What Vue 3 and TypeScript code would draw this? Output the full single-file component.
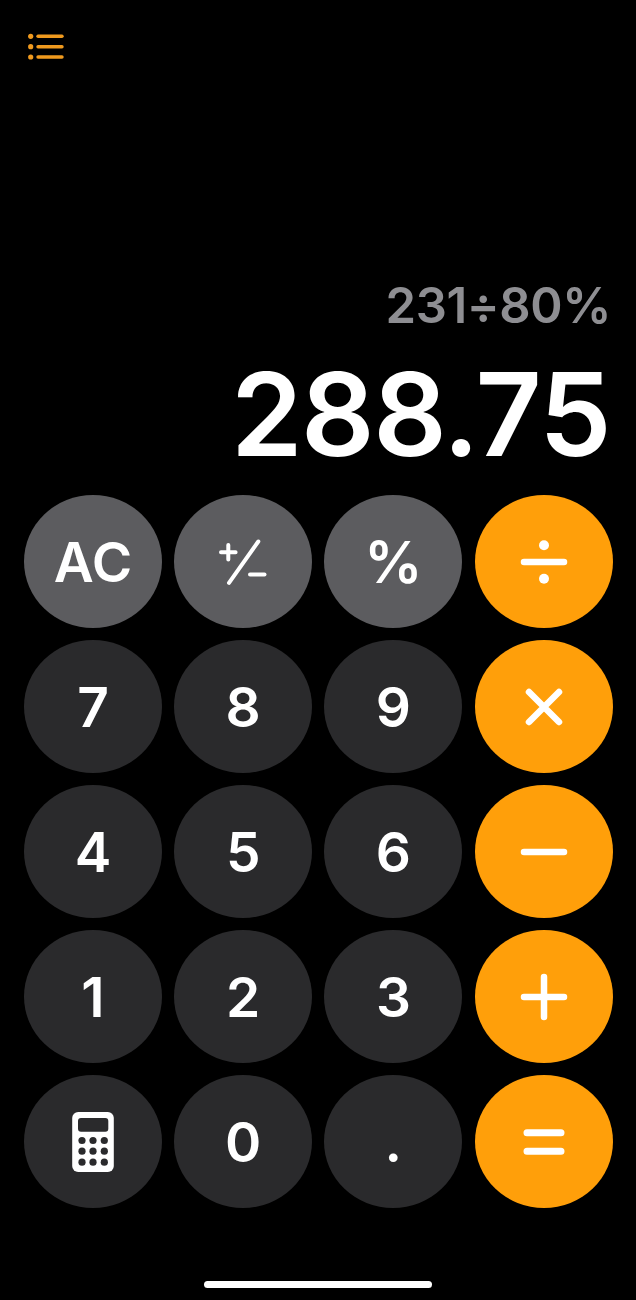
<script setup lang="ts">
interface Key {
  label: string
  kind: 'fn' | 'num' | 'op'
  icon?: string
}

const keys: Key[] = [
  { label: 'AC', kind: 'fn' },
  { label: '+/-', kind: 'fn', icon: 'sign' },
  { label: '%', kind: 'fn' },
  { label: 'divide', kind: 'op', icon: 'divide' },
  { label: '7', kind: 'num' },
  { label: '8', kind: 'num' },
  { label: '9', kind: 'num' },
  { label: 'multiply', kind: 'op', icon: 'times' },
  { label: '4', kind: 'num' },
  { label: '5', kind: 'num' },
  { label: '6', kind: 'num' },
  { label: 'minus', kind: 'op', icon: 'minus' },
  { label: '1', kind: 'num' },
  { label: '2', kind: 'num' },
  { label: '3', kind: 'num' },
  { label: 'plus', kind: 'op', icon: 'plus' },
  { label: 'calculator', kind: 'num', icon: 'calc' },
  { label: '0', kind: 'num' },
  { label: '.', kind: 'num' },
  { label: 'equals', kind: 'op', icon: 'equals' }
]

const calcDots: [number, number][] = []
for (const y of [-1.5, 9.2, 20.2]) {
  for (const x of [-11, 0, 11.3]) {
    calcDots.push([x, y])
  }
}
</script>

<template>
  <div class="screen">
    <header class="top">
      <svg class="list-icon" width="36" height="28" viewBox="0 0 36 28" fill="none" aria-label="history">
        <g fill="#f09a1e">
          <circle cx="2.7" cy="3.3" r="2.6" />
          <circle cx="2.7" cy="13.7" r="2.6" />
          <circle cx="2.7" cy="24" r="2.6" />
        </g>
        <g stroke="#f09a1e" stroke-width="3.4" stroke-linecap="round">
          <path d="M10 3.3H34" />
          <path d="M10 13.7H34" />
          <path d="M10 24H34" />
        </g>
      </svg>
    </header>

    <section class="display">
      <div class="expression">231÷80%</div>
      <div class="result">288.75</div>
    </section>

    <section class="keypad">
      <button v-for="key in keys" :key="key.label" class="key" :class="[key.kind, { percent: key.label === '%' }]" type="button" :aria-label="key.label">
        <template v-if="!key.icon">{{ key.label }}</template>
        <svg v-else width="80" height="80" viewBox="-40 -40 80 80" fill="none" stroke="#fff" stroke-linecap="round">
          <g v-if="key.icon === 'sign'" stroke-width="4">
            <path d="M-22 -9.8H-7.4M-14.7 -17V-2.6" />
            <path d="M-14 20.8L15.3 -20.5" />
            <path d="M7 12.5H21.5" />
          </g>
          <g v-else-if="key.icon === 'divide'">
            <path d="M-20 0H20" stroke-width="6.5" />
            <circle cx="0" cy="-16.7" r="5" fill="#fff" stroke="none" />
            <circle cx="0" cy="16.7" r="5" fill="#fff" stroke="none" />
          </g>
          <path v-else-if="key.icon === 'times'" d="M-15 -15L15 15M15 -15L-15 15" stroke-width="6.5" />
          <path v-else-if="key.icon === 'minus'" d="M-20 0H20" stroke-width="6.5" />
          <path v-else-if="key.icon === 'plus'" d="M-20 0H20M0 -20V20" stroke-width="6.5" />
          <path v-else-if="key.icon === 'equals'" d="M-17 -9.3H17M-17 9.3H17" stroke-width="7" />
          <g v-else-if="key.icon === 'calc'" stroke="none">
            <rect x="-20.8" y="-30" width="41.6" height="60" rx="6" fill="#fff" />
            <rect x="-15" y="-24" width="30.3" height="13.8" rx="3" fill="#2a2a2c" />
            <circle v-for="(d, i) in calcDots" :key="i" :cx="d[0]" :cy="d[1]" r="3.6" fill="#2a2a2c" />
          </g>
        </svg>
      </button>
    </section>

    <div class="home-bar"></div>
  </div>
</template>

<style>
html,
body {
  margin: 0;
  background: #000;
}
</style>

<style scoped>
.screen {
  display: flex;
  flex-direction: column;
  width: 636px;
  height: 1300px;
  background: #000;
  font-family: Inter, "Liberation Sans", sans-serif;
  overflow: hidden;
}

.top {
  height: 60px;
  padding: 33px 0 0 28px;
  flex: none;
}

.list-icon {
  display: block;
}

.display {
  flex: none;
  height: 402px;
  display: flex;
  flex-direction: column;
  justify-content: flex-end;
  align-items: flex-end;
  padding: 0 26px 11px 0;
  box-sizing: border-box;
}

.expression {
  margin-bottom: 10px;
  margin-right: -1px;
  font-size: 49px;
  font-weight: 600;
  letter-spacing: -0.4px;
  line-height: 60px;
  color: #8e8e92;
}

.result {
  font-size: 115px;
  font-weight: 600;
  letter-spacing: -1.5px;
  line-height: 138px;
  color: #fff;
}

.keypad {
  flex: none;
  display: grid;
  grid-template-columns: repeat(4, 138px);
  grid-auto-rows: 133px;
  column-gap: 12.2px;
  row-gap: 12px;
  padding-left: 24px;
}

.key {
  display: flex;
  align-items: center;
  justify-content: center;
  padding: 0;
  border: none;
  border-radius: 50%;
  font-family: inherit;
  font-size: 55px;
  font-weight: 600;
  color: #fff;
}

.key svg {
  display: block;
}

.fn {
  background: #5c5c5f;
}

.num {
  background: #2a2a2c;
}

.op {
  background: #ff9f0a;
}

.percent {
  font-size: 58px;
}

.home-bar {
  flex: none;
  width: 228px;
  height: 7px;
  margin: 73px auto 0;
  border-radius: 4px;
  background: #fff;
}
</style>
